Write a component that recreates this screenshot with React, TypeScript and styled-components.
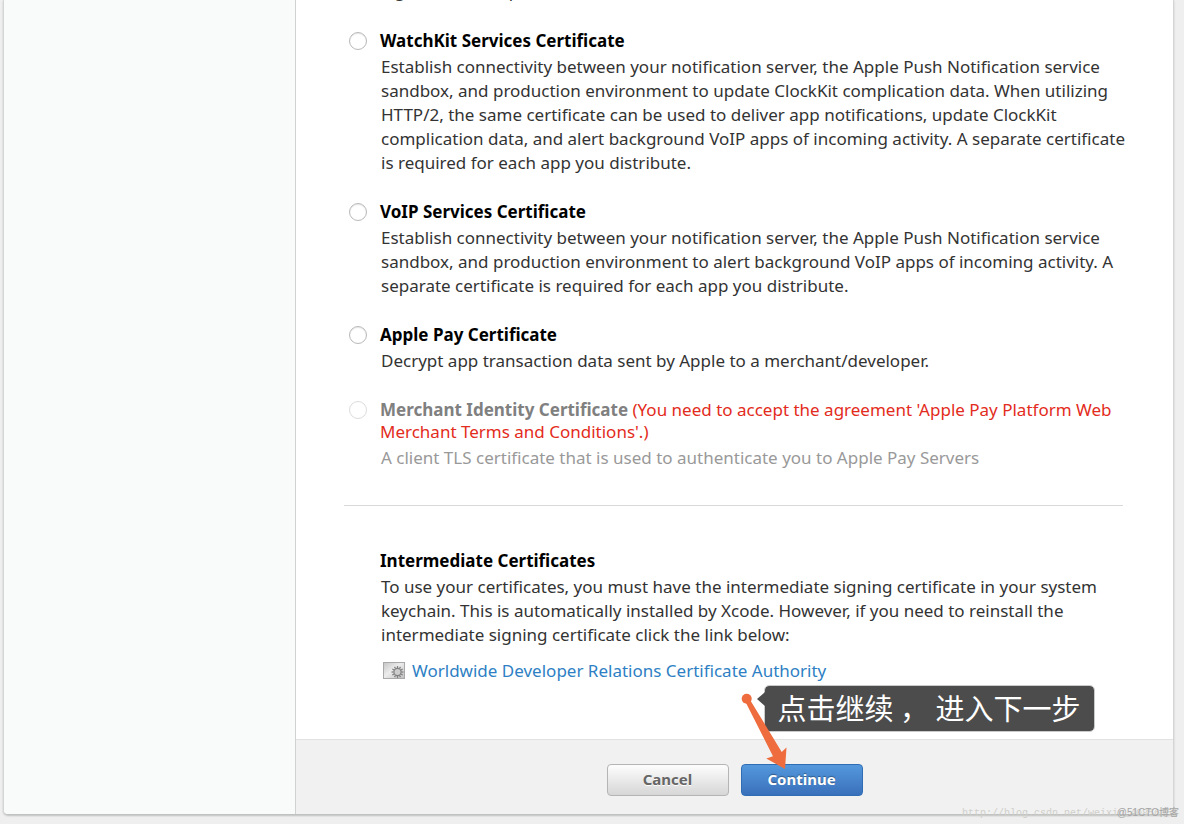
import React from "react";
import styled, { createGlobalStyle } from "styled-components";

const GlobalStyle = createGlobalStyle`
  *, *::before, *::after { box-sizing: border-box; }
  body {
    margin: 0;
    background: #efefef;
    color: #333;
    font-family: "Noto Sans", "Noto Sans CJK SC", sans-serif;
    font-size: 17px;
    line-height: 24px;
  }
`;

const Page = styled.div`
  position: relative;
  padding: 0 10px 9px 3px;
  overflow: hidden;
`;

const Panel = styled.div`
  display: flex;
  border: 1px solid #d4d6d6;
  border-top: 0;
  border-bottom-color: #bfc2c1;
  border-radius: 0 0 5px 5px;
  background: #fff;
  box-shadow: 0 1px 2px rgba(0, 0, 0, 0.2);
`;

const Sidebar = styled.aside`
  flex: 0 0 292px;
  border-right: 1px solid #cfd2d1;
  border-radius: 0 0 0 4px;
  background: #f9fbfa;
`;

const Main = styled.main`
  flex: 1;
  min-width: 0;
`;

const Options = styled.form`
  display: flex;
  flex-direction: column;
  gap: 26px;
  margin: 0 50px 0 48px;
  padding-bottom: 35px;
  border-bottom: 1px solid #d9d9d9;
`;

const ScrolledText = styled.p`
  display: flex;
  align-items: flex-end;
  height: 4px;
  margin: 0 0 0 37px;
  overflow: hidden;
  line-height: 26px;
`;

const Option = styled.div<{ $disabled?: boolean }>`
  display: grid;
  grid-template-columns: 18px 1fr;
  column-gap: 14px;
  margin: 0 -8px 0 5px;
  color: ${(p) => (p.$disabled ? "#999" : "#333")};
`;

const Radio = styled.input`
  appearance: none;
  width: 18px;
  height: 18px;
  margin: 2px 0 0;
  border: 1px solid #b9b9b9;
  border-radius: 50%;
  background: #fff;
  box-shadow: inset 0 1px 1px rgba(0, 0, 0, 0.1);

  &:disabled { border-color: #dcdcdc; box-shadow: none; }
  &:checked { border: 5px solid #3f83cf; }
`;

const OptionTitle = styled.label<{ $disabled?: boolean }>`
  margin-left: -1px;
  color: ${(p) => (p.$disabled ? "#808080" : "#000")};
  font-weight: 700;
  line-height: 22px;
`;

const Warning = styled.span`
  color: #e32b20;
  font-weight: 400;
`;

const OptionText = styled.p`
  grid-column: 2;
  margin: 3px 0 0;
`;

const Intermediate = styled.section`
  margin: 44px 50px 0 84px;
  padding-bottom: 53px;
`;

const SectionTitle = styled.h2`
  margin: 0;
  color: #000;
  font-size: 17px;
  line-height: 22px;
`;

const SectionText = styled.p`
  margin: 3px 0 12px 1px;
`;

const CertLink = styled.a`
  display: inline-flex;
  align-items: center;
  gap: 7px;
  margin-left: 3px;
  color: #2e7fc4;
  text-decoration: none;
`;

const Footer = styled.footer`
  display: flex;
  justify-content: center;
  gap: 12px;
  padding: 24px 0 18px;
  border-top: 1px solid #e2e2e2;
  border-radius: 0 0 4px 0;
  background: #f1f1f1;
`;

const Button = styled.button<{ $primary?: boolean }>`
  width: 122px;
  height: 32px;
  padding: 0 0 2px;
  border: 1px solid ${(p) => (p.$primary ? "#2f6db5" : "#b5b5b5")};
  border-radius: 4px;
  background: ${(p) =>
    p.$primary
      ? "linear-gradient(#5498dc, #3a70bb)"
      : "linear-gradient(#fdfdfd, #d6d6d6)"};
  color: ${(p) => (p.$primary ? "#fff" : "#666")};
  font: 700 15px/20px "Noto Sans", sans-serif;
  text-shadow: ${(p) =>
    p.$primary ? "0 -1px 1px rgba(0, 0, 0, 0.35)" : "0 1px 0 #fff"};
`;

const ButtonAnchor = styled.div`
  position: relative;
  display: flex;
`;

const Callout = styled.div`
  position: absolute;
  left: 23px;
  top: -79px;
  padding: 0 13px 2px;
  border: 1px solid #c9cbca;
  border-radius: 5px;
  background: #4c4c4c;
  background-clip: padding-box;
  color: #fff;
  font-family: "Noto Sans CJK SC", sans-serif;
  font-size: 29px;
  font-weight: 400;
  line-height: 43px;
  white-space: pre;

  &::before {
    content: "";
    position: absolute;
    left: -8px;
    top: 6px;
    border: solid transparent;
    border-width: 7px 8px 7px 0;
    border-right-color: #4c4c4c;
  }
`;

const Arrow = styled.svg`
  position: absolute;
  left: -2px;
  top: -74px;
  pointer-events: none;
`;

const BlogMark = styled.span`
  position: absolute;
  right: 6px;
  bottom: 2px;
  color: #cfcfca;
  font: 10px/16px "Liberation Mono", monospace;
`;

const SiteMark = styled.span`
  position: absolute;
  right: 5px;
  bottom: 3px;
  color: #a5a5a5;
  font: 10px/16px "Liberation Sans", "Noto Sans CJK SC", sans-serif;
`;

type Certificate = {
  id: string;
  title: string;
  text: string;
  warning?: string;
};

const certificates: Certificate[] = [
  {
    id: "watchkit",
    title: "WatchKit Services Certificate",
    text: "Establish connectivity between your notification server, the Apple Push Notification service sandbox, and production environment to update ClockKit complication data. When utilizing HTTP/2, the same certificate can be used to deliver app notifications, update ClockKit complication data, and alert background VoIP apps of incoming activity. A separate certificate is required for each app you distribute.",
  },
  {
    id: "voip",
    title: "VoIP Services Certificate",
    text: "Establish connectivity between your notification server, the Apple Push Notification service sandbox, and production environment to alert background VoIP apps of incoming activity. A separate certificate is required for each app you distribute.",
  },
  {
    id: "applepay",
    title: "Apple Pay Certificate",
    text: "Decrypt app transaction data sent by Apple to a merchant/developer.",
  },
  {
    id: "merchant",
    title: "Merchant Identity Certificate",
    text: "A client TLS certificate that is used to authenticate you to Apple Pay Servers",
    warning:
      "(You need to accept the agreement 'Apple Pay Platform Web Merchant Terms and Conditions'.)",
  },
];

const teeth = [0, 30, 60, 90, 120, 150, 180, 210, 240, 270, 300, 330];

function CertificateIcon() {
  return (
    <svg width="22" height="18" viewBox="0 0 22 18" aria-hidden="true">
      <defs>
        <linearGradient id="certFace" x1="0" y1="0" x2="1" y2="1">
          <stop offset="0" stopColor="#c4c4c4" />
          <stop offset="0.45" stopColor="#ececec" />
          <stop offset="1" stopColor="#c0c0c0" />
        </linearGradient>
      </defs>
      <rect x="0.5" y="0.5" width="21" height="16" fill="url(#certFace)" stroke="#a9a9a9" />
      <g transform="translate(14.5 10)" stroke="#808080" fill="none">
        {teeth.map((a) => (
          <path key={a} d="M0 -4V-6" strokeWidth="1.3" transform={`rotate(${a})`} />
        ))}
        <circle r="3.6" fill="#cdcdcd" strokeWidth="1.2" />
      </g>
    </svg>
  );
}

export default function App() {
  return (
    <>
      <GlobalStyle />
      <Page>
        <Panel>
          <Sidebar />
          <Main>
            <Options>
              <ScrolledText>Sign and send updates</ScrolledText>
              {certificates.map((c) => (
                <Option key={c.id} $disabled={!!c.warning}>
                  <Radio type="radio" name="certificate" id={c.id} disabled={!!c.warning} />
                  <OptionTitle htmlFor={c.id} $disabled={!!c.warning}>
                    {c.title}
                    {c.warning && <Warning> {c.warning}</Warning>}
                  </OptionTitle>
                  <OptionText>{c.text}</OptionText>
                </Option>
              ))}
            </Options>
            <Intermediate>
              <SectionTitle>Intermediate Certificates</SectionTitle>
              <SectionText>
                To use your certificates, you must have the intermediate signing certificate in your
                system keychain. This is automatically installed by Xcode. However, if you need to
                reinstall the intermediate signing certificate click the link below:
              </SectionText>
              <CertLink href="#authority">
                <CertificateIcon />
                Worldwide Developer Relations Certificate Authority
              </CertLink>
            </Intermediate>
            <Footer>
              <Button type="button">Cancel</Button>
              <ButtonAnchor>
                <Button type="button" $primary>
                  Continue
                </Button>
                <Callout>{"点击继续\u00a0，\u00a0进入下一步"}</Callout>
                <Arrow width="56" height="80" viewBox="0 0 56 80" aria-hidden="true">
                  <circle cx="7.7" cy="8.7" r="5" fill="#ee6c3d" />
                  <path
                    d="M6 11L10.500 9L42.700 62L47.500 57.500L46 79L27.300 68.500L34 66.300Z"
                    fill="#ee6c3d"
                  />
                </Arrow>
              </ButtonAnchor>
            </Footer>
          </Main>
        </Panel>
        <BlogMark>http://blog.csdn.net/weixin_40856052</BlogMark>
        <SiteMark>@51CTO博客</SiteMark>
      </Page>
    </>
  );
}
